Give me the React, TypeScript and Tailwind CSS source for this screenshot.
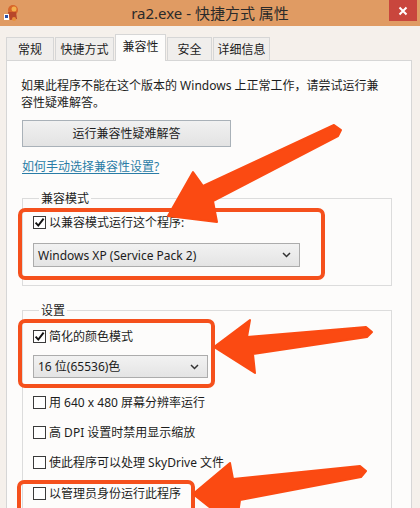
import React from "react";

function Check({ checked }: { checked?: boolean }) {
  return (
    <span className="w-[13px] h-[13px] border border-[#3a3a3a] bg-white flex items-center justify-center shrink-0">
      {checked && (
        <svg width="11" height="11" viewBox="0 0 11 11">
          <path d="M1.6 5.6 L4.3 8.6 L9.6 1.6" fill="none" stroke="#111" strokeWidth="1.9" />
        </svg>
      )}
    </span>
  );
}

function Row({ checked, label, className }: { checked?: boolean; label: string; className?: string }) {
  return (
    <div className={"flex items-center gap-[3px] h-[17px] " + (className ?? "")}>
      <Check checked={checked} />
      <span className="whitespace-nowrap">{label}</span>
    </div>
  );
}

function Select({ text, className }: { text: string; className: string }) {
  return (
    <div
      className={
        "flex items-center justify-between border border-[#acacac] bg-gradient-to-b from-[#f2f2f2] to-[#e4e4e4] pl-[4px] pr-[8px] " +
        className
      }
    >
      <span className="whitespace-nowrap">{text}</span>
      <svg width="9" height="6" viewBox="0 0 9 6">
        <path d="M1 1 L4.5 4.5 L8 1" fill="none" stroke="#333" strokeWidth="1.5" />
      </svg>
    </div>
  );
}

export default function App() {
  const tabs = [
    { t: "常规", w: "w-[48px]" },
    { t: "快捷方式", w: "w-[59px]" },
    { t: "兼容性", w: "w-[51px]", sel: true },
    { t: "安全", w: "w-[45px]" },
    { t: "详细信息", w: "w-[57px]" },
  ];
  return (
    <div className="relative w-[420px] h-[508px] overflow-hidden bg-[#f5f0eb] text-[12px] leading-[17px] text-[#1c1c1c] font-['Noto_Sans','Noto_Sans_CJK_SC',sans-serif]">
      {/* title bar */}
      <div className="flex items-center h-[26px] bg-[#e09b63]">
        <div className="w-[34px] h-full flex items-start pl-[2px] pt-[3px]">
          <svg width="18" height="20" viewBox="0 0 18 20">
            <circle cx="11" cy="7" r="5" fill="#d8652a" />
            <circle cx="12" cy="6" r="2.5" fill="#f3b04e" />
            <path d="M6 9 L14 9 L15 16 L8 17 Z" fill="#b8462a" />
            <rect x="2" y="11" width="5" height="6" fill="#ffffff" />
            <rect x="3" y="12" width="3" height="3" fill="#2a4fa8" />
            <circle cx="12" cy="16" r="2" fill="#e88f3a" />
          </svg>
        </div>
        <div className="flex-1 text-center text-[15px] text-[#2a2a2a] leading-[20px] whitespace-nowrap">
          ra2.exe - 快捷方式 属性
        </div>
        <div className="w-[34px] h-full flex items-start justify-end pr-[3px]">
          <div className="w-[28px] h-[21px] bg-[#c9463d] flex items-center justify-center">
            <svg width="10" height="10" viewBox="0 0 10 10">
              <path d="M1.5 1.5 L8.5 8.5 M8.5 1.5 L1.5 8.5" stroke="#fff" strokeWidth="2" />
            </svg>
          </div>
        </div>
      </div>

      {/* tabs */}
      <div className="flex items-end pl-[6px] gap-[1px] mt-[8px] h-[26px]">
        {tabs.map((tab) =>
          tab.sel ? (
            <div
              key={tab.t}
              className={
                tab.w +
                " relative z-10 h-[27px] -mb-px bg-[#fdfcfb] border border-b-0 border-[#d6d6d6] flex items-start justify-center pt-[3px] whitespace-nowrap"
              }
            >
              {tab.t}
            </div>
          ) : (
            <div
              key={tab.t}
              className={
                tab.w +
                " h-[23px] bg-[#f0eeec] border border-b-0 border-[#d6d6d6] flex items-center justify-center whitespace-nowrap"
              }
            >
              {tab.t}
            </div>
          )
        )}
      </div>

      {/* panel */}
      <div className="ml-[6px] w-[406px] h-[500px] bg-[#fdfcfb] border border-[#d6d6d6] pt-[16px] pl-[14px]">
        <p className="whitespace-nowrap">
          如果此程序不能在这个版本的 Windows 上正常工作，请尝试运行兼
          <br />
          容性疑难解答。
        </p>
        <div className="ml-[1px] mt-[9px] w-[209px] h-[27px] border border-[#a9b1b8] bg-gradient-to-b from-[#f1f1f1] to-[#e3e3e3] flex items-center justify-center">
          运行兼容性疑难解答
        </div>
        <div className="ml-[1px] mt-[11px] text-[#2a7ca6] underline underline-offset-2 whitespace-nowrap">
          如何手动选择兼容性设置?
        </div>

        <fieldset className="ml-[1px] mt-[15px] w-[370px] border border-[#dcdcdc] pl-[10px] pb-[18px]">
          <legend className="ml-[6px] px-[2px]">兼容模式</legend>
          <Row checked label="以兼容模式运行这个程序:" className="mt-[7px]" />
          <Select text="Windows XP (Service Pack 2)" className="mt-[12px] w-[267px] h-[24px]" />
        </fieldset>

        <fieldset className="ml-[1px] mt-[16px] w-[370px] border border-[#dcdcdc] pl-[10px] pb-[30px]">
          <legend className="ml-[6px] px-[2px]">设置</legend>
          <Row checked label="简化的颜色模式" className="mt-[9px]" />
          <Select text="16 位(65536)色" className="mt-[10px] w-[175px] h-[23px]" />
          <Row label="用 640 x 480 屏幕分辨率运行" className="mt-[16px]" />
          <Row label="高 DPI 设置时禁用显示缩放" className="mt-[13px]" />
          <Row label="使此程序可以处理 SkyDrive 文件" className="mt-[13px]" />
          <Row label="以管理员身份运行此程序" className="mt-[14px]" />
        </fieldset>
      </div>

      {/* annotation highlight boxes */}
      <div className="absolute left-[18px] top-[208px] w-[307px] h-[72px] border-[4px] border-[#f5501c] rounded-[7px]" />
      <div className="absolute left-[18px] top-[319px] w-[197px] h-[69px] border-[4px] border-[#f5501c] rounded-[7px]" />
      <div className="absolute left-[17px] top-[480px] w-[178px] h-[44px] border-[4px] border-[#f5501c] rounded-[7px]" />

      {/* arrows */}
      <svg className="absolute left-0 top-0 pointer-events-none" width="420" height="508" viewBox="0 0 420 508">
        <g fill="#fb4a12" stroke="#fb4a12" strokeWidth="2" strokeLinejoin="round">
          <polygon points="168,216 193,172 203,186 334,125 341,130 338,136 213,201 217,222" />
          <polygon points="214,347 250,320 247,337 366,327 372,332 367,337 253,354 255,373" />
          <polygon points="193,494 230,463 233,479 360,466 366,471 361,477 240,500 236,528" />
        </g>
      </svg>
    </div>
  );
}
